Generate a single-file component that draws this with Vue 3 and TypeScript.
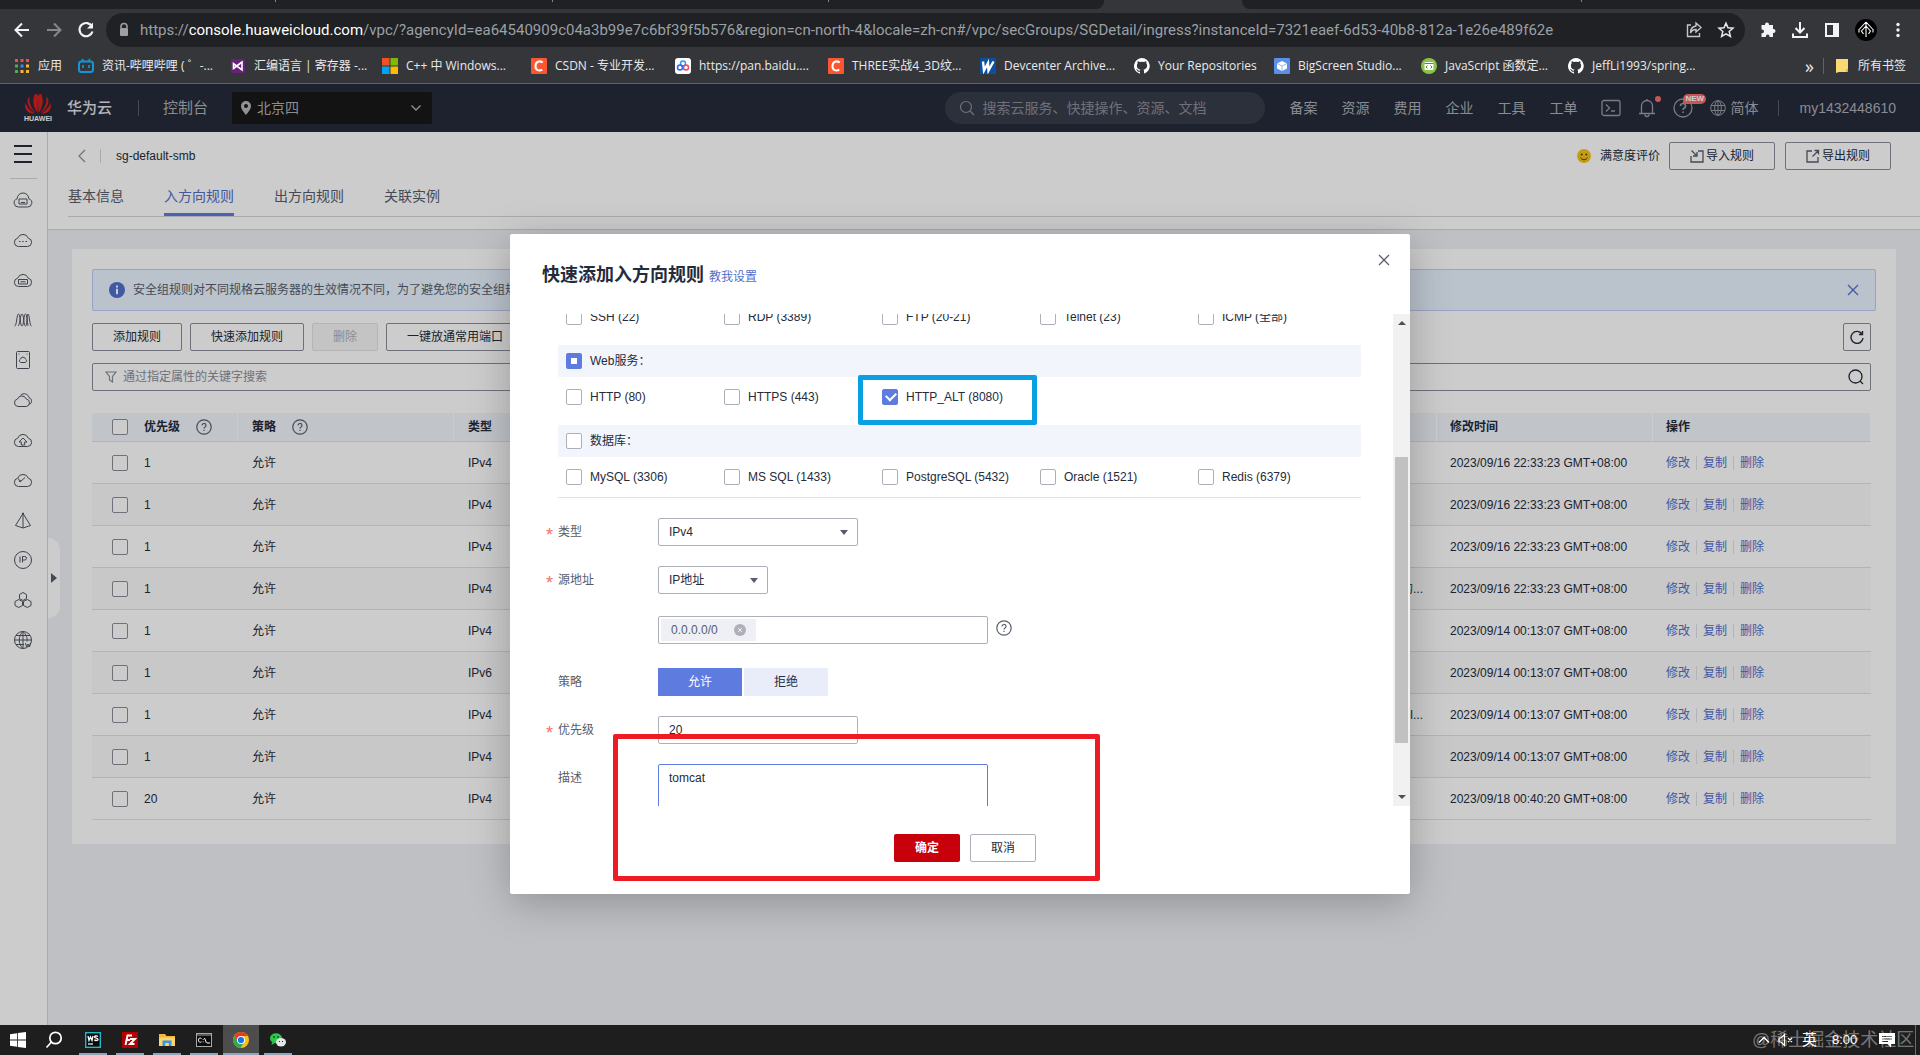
<script setup lang="ts">
import { ref } from 'vue'

interface Bookmark { icon: string; label: string; width: number }
interface Rule { priority: string; type: string; note: string; time: string }
interface Port { label: string; checked?: boolean }

const bookmarks: Bookmark[] = [
  { icon: 'apps', label: '应用', width: 64 },
  { icon: 'bili', label: '资讯-哔哩哔哩 ( ゜-...', width: 152 },
  { icon: 'vs', label: '汇编语言 | 寄存器 -...', width: 152 },
  { icon: 'ms', label: 'C++ 中 Windows...', width: 149 },
  { icon: 'csdn', label: 'CSDN - 专业开发...', width: 144 },
  { icon: 'pan', label: 'https://pan.baidu....', width: 153 },
  { icon: 'csdn', label: 'THREE实战4_3D纹...', width: 152 },
  { icon: 'w', label: 'Devcenter Archive...', width: 154 },
  { icon: 'git', label: 'Your Repositories', width: 140 },
  { icon: 'big', label: 'BigScreen Studio...', width: 147 },
  { icon: 'js', label: 'JavaScript 函数定...', width: 147 },
  { icon: 'git', label: 'JeffLi1993/spring...', width: 140 },
]

const navLinks = ['备案', '资源', '费用', '企业', '工具', '工单']
const tabs = ['基本信息', '入方向规则', '出方向规则', '关联实例']
const activeTab = ref(1)

const cloud = 'M5.500 16.500a4.200 4.200 0 0 1-.800-8.300 5.600 5.600 0 0 1 10.600 0A4.200 4.200 0 0 1 14.500 16.500z'
const sideIcons: string[] = [
  'M5.500 17a4.200 4.200 0 0 1-1.400-8.200C4.500 5 7 3 10 3s5.500 2 5.900 5.800A4.200 4.200 0 0 1 14.500 17zM6 9h8v5H6zM8 12.500h4',
  cloud + 'M6 11.500h1.500M9.300 11.500h1.400M12.500 11.500H14',
  cloud + 'M5.500 9.500h9v4.500h-9zM7.500 11.800h5',
  'M1.500 16c2.500 0 2-12 4-12s1.500 12 3.500 12 1.500-12 3.500-12 1.500 12 3 12M5 16c2 0 2-12 4-12s1.500 12 3.500 12 1-12 2.500-12 1.500 12 3.500 12',
  'M4.500 1.500h11a1 1 0 0 1 1 1v15a1 1 0 0 1-1 1h-11a1 1 0 0 1-1-1v-15a1 1 0 0 1 1-1zM7.500 12.500a2 2 0 0 1 0-3.500 2.600 2.600 0 0 1 5 0 2 2 0 0 1 0 3.500zM5.500 4h1M13.500 4h1',
  'M5 16.500a3.800 3.800 0 0 1-.500-7.500 4.700 4.700 0 0 1 8.800 0 3.800 3.800 0 0 1 0 7.500zM7.500 5.300c3-3 8-1.300 8.500 2.400 3.200.700 3.500 5.300.500 6.600',
  cloud + 'M10 8l-4 4h2.300v3h3.400v-3H14z',
  cloud + 'M5.500 8.500l1.500 3.500 5-4.500M7 12l1-2',
  'M10 3.500L2.500 15.500 10 18l7.500-2.500zM10 3.500V18M9.500 3h1v1h-1z',
  'M10 1.500a8.500 8.500 0 1 1 0 17 8.500 8.500 0 0 1 0-17zM7 6.500v6M9.500 12.500v-6h2.200a1.700 1.700 0 0 1 0 3.500H9.500',
  'M10 2.500l3.500 2v4l-3.500 2-3.500-2v-4zM5.700 9.500l3.800 2v4l-3.800 2-3.700-2v-4zM14.300 9.500l3.700 2v4l-3.700 2-3.800-2v-4z',
  'M10 1.500a8.500 8.500 0 1 1 0 17 8.500 8.500 0 0 1 0-17zM10 1.500c-5 4.500-5 12.500 0 17M10 1.500c3.500 3 4.500 6.500 4 10M1.500 10h17M3 5.500h14M3 14.500h8M10 1.500v17M12.500 13l1 4 1.500-3 1.500 3 1-4',
]

const rules: Rule[] = [
  { priority: '1', type: 'IPv4', note: '', time: '2023/09/16 22:33:23 GMT+08:00' },
  { priority: '1', type: 'IPv4', note: '', time: '2023/09/16 22:33:23 GMT+08:00' },
  { priority: '1', type: 'IPv4', note: '', time: '2023/09/16 22:33:23 GMT+08:00' },
  { priority: '1', type: 'IPv4', note: '的...', time: '2023/09/16 22:33:23 GMT+08:00' },
  { priority: '1', type: 'IPv4', note: '', time: '2023/09/14 00:13:07 GMT+08:00' },
  { priority: '1', type: 'IPv6', note: '', time: '2023/09/14 00:13:07 GMT+08:00' },
  { priority: '1', type: 'IPv4', note: 'l...', time: '2023/09/14 00:13:07 GMT+08:00' },
  { priority: '1', type: 'IPv4', note: '', time: '2023/09/14 00:13:07 GMT+08:00' },
  { priority: '20', type: 'IPv4', note: '', time: '2023/09/18 00:40:20 GMT+08:00' },
]
const actions = ['修改', '复制', '删除']

const remotePorts: Port[] = [
  { label: 'SSH (22)' }, { label: 'RDP (3389)' }, { label: 'FTP (20-21)' }, { label: 'Telnet (23)' }, { label: 'ICMP (全部)' },
]
const webPorts: Port[] = [
  { label: 'HTTP (80)' }, { label: 'HTTPS (443)' }, { label: 'HTTP_ALT (8080)', checked: true },
]
const dbPorts: Port[] = [
  { label: 'MySQL (3306)' }, { label: 'MS SQL (1433)' }, { label: 'PostgreSQL (5432)' }, { label: 'Oracle (1521)' }, { label: 'Redis (6379)' },
]

const priority = ref('20')
const description = ref('tomcat')
const allow = ref(true)
</script>

<template>
  <div class="screen">
    <header class="chrome">
      <div class="tabstrip">
        <span class="strip-left"><i></i><i></i><i></i></span><span class="strip-active"></span><span class="strip-right"><i></i></span>
      </div>
      <div class="toolbar">
        <button class="tool" aria-label="back"><svg width="20" height="20" viewBox="0 0 20 20" fill="none" stroke="#f1f3f4" stroke-width="2"><path d="M17 10H4M10 3.500L3.500 10l6.500 6.500" /></svg></button>
        <button class="tool" aria-label="forward"><svg width="20" height="20" viewBox="0 0 20 20" fill="none" stroke="#85878a" stroke-width="2"><path d="M3 10h13M10 3.500l6.500 6.500-6.500 6.500" /></svg></button>
        <button class="tool" aria-label="reload"><svg width="20" height="20" viewBox="0 0 20 20" fill="none" stroke="#f1f3f4" stroke-width="2.200"><path d="M16 6.500A6.600 6.600 0 1 0 16.500 11.500" /><path d="M17 2.500v6h-6z" fill="#f1f3f4" stroke="none" /></svg></button>
        <div class="omnibox">
          <svg width="12" height="16" viewBox="0 0 12 16"><path d="M3 6V4.500a3 3 0 0 1 6 0V6" fill="none" stroke="#9aa0a6" stroke-width="1.600" /><rect x="2" y="6" width="8" height="8" rx="1" fill="#9aa0a6" /></svg>
          <span class="url">https://<b>console.huaweicloud.com</b>/vpc/?agencyId=ea64540909c04a3b99e7c6bf39f5b576&amp;region=cn-north-4&amp;locale=zh-cn#/vpc/secGroups/SGDetail/ingress?instanceId=7321eaef-6d53-40b8-812a-1e26e489f62e</span>
          <svg class="omni-icon" width="18" height="18" viewBox="0 0 18 18" fill="none" stroke="#c4c7c5" stroke-width="1.400"><path d="M6 4H2.500v11.500h12V12M11 2l5 4.500-5 4.500V8.500C8 8.500 6.500 9.500 5.500 12c0-4 2-6.500 5.500-7z" /></svg>
          <svg class="omni-icon" width="18" height="18" viewBox="0 0 18 18" fill="none" stroke="#e8eaed" stroke-width="1.500"><path d="M9 2.200l2 4.600 5 .4-3.800 3.300 1.200 4.900L9 12.800l-4.400 2.600 1.200-4.900L2 7.200l5-.4z" /></svg>
        </div>
        <svg width="18" height="18" viewBox="0 0 18 18" fill="#f1f3f4"><path d="M6 3.500a2 2 0 0 1 4 0V4h4v4h.5a2 2 0 0 1 0 4H14v4h-3.500v-.6a1.800 1.800 0 0 0-3.600 0v.6H2.500v-3.800h.6a1.900 1.900 0 0 0 0-3.800h-.6V4H6z" /></svg>
        <svg width="18" height="18" viewBox="0 0 18 18" fill="none" stroke="#f1f3f4" stroke-width="2"><path d="M9 1v10M4.500 7L9 11.500 13.500 7M2 12.500V16h14v-3.500" /></svg>
        <svg width="18" height="18" viewBox="0 0 18 18"><path d="M3 3h12v12H3z" fill="none" stroke="#f1f3f4" stroke-width="2" /><path d="M10 2h6v14h-6z" fill="#f1f3f4" /></svg>
        <svg width="22" height="22" viewBox="0 0 22 22"><circle cx="11" cy="11" r="11" fill="#000" /><path d="M11 3v15M11 3L4.500 10M11 3l6.500 7M11 7l-4.500 5 2 3M11 7l4.500 5-2 3M4 10v3.500M18 10v3.500" stroke="#fff" stroke-width="1.100" fill="none" /></svg>
        <svg class="dots" width="6" height="18" viewBox="0 0 6 18" fill="#f1f3f4"><circle cx="3" cy="3.500" r="1.700" /><circle cx="3" cy="9" r="1.700" /><circle cx="3" cy="14.500" r="1.700" /></svg>
      </div>
      <nav class="bookmarks">
        <a v-for="(b, i) in bookmarks" :key="i" href="#" class="bookmark" :style="{ width: b.width + 'px' }">
          <svg width="16" height="16" viewBox="0 0 16 16">
            <template v-if="b.icon === 'apps'">
              <path d="M1 1h3v3H1zM6.500 1h3v3h-3zM12 1h3v3h-3z" fill="#e5534b" /><path d="M1 6.500h3v3H1z" fill="#4caf50" /><path d="M6.500 6.500h3v3h-3z" fill="#4285f4" /><path d="M12 6.500h3v3h-3zM6.500 12h3v3h-3zM12 12h3v3h-3z" fill="#f2b632" /><path d="M1 12h3v3H1z" fill="#4caf50" />
            </template>
            <template v-else-if="b.icon === 'bili'">
              <path d="M4 1l2 2.500M12 1l-2 2.500" stroke="#1296db" stroke-width="1.600" /><rect x="1" y="3.500" width="14" height="10.500" rx="2.500" fill="none" stroke="#1296db" stroke-width="2" /><path d="M5 7v3M11 7v3" stroke="#1296db" stroke-width="1.600" />
            </template>
            <template v-else-if="b.icon === 'vs'">
              <rect x="1" y="1" width="14" height="14" fill="#68217a" /><path d="M3.500 5.500v5L12 4v8L3.500 5.500zM3.500 10.500L12 4" fill="none" stroke="#fff" stroke-width="1.600" />
            </template>
            <template v-else-if="b.icon === 'ms'">
              <path d="M0 0h7.500v7.500H0z" fill="#f25022" /><path d="M8.500 0H16v7.500H8.500z" fill="#7fba00" /><path d="M0 8.500h7.500V16H0z" fill="#00a4ef" /><path d="M8.500 8.500H16V16H8.500z" fill="#ffb900" />
            </template>
            <template v-else-if="b.icon === 'csdn'">
              <rect width="16" height="16" rx="1" fill="#fc5531" /><path d="M11.800 4.500C8 2 4.500 4 4.500 8.200c0 4 3.500 5.300 6.800 3.500" fill="none" stroke="#fff" stroke-width="2" />
            </template>
            <template v-else-if="b.icon === 'pan'">
              <rect width="16" height="16" rx="3" fill="#fff" /><circle cx="8" cy="5.500" r="2.500" fill="none" stroke="#2f9bff" stroke-width="1.500" /><circle cx="5" cy="9.500" r="2.500" fill="none" stroke="#2468f2" stroke-width="1.500" /><circle cx="11" cy="9.500" r="2.500" fill="none" stroke="#f0455a" stroke-width="1.500" />
            </template>
            <template v-else-if="b.icon === 'w'">
              <rect width="16" height="16" fill="#0b4f9e" /><path d="M3 3.500l1 9L8 5l.500 7.500L13.500 3.500" fill="none" stroke="#fff" stroke-width="2.400" />
            </template>
            <template v-else-if="b.icon === 'git'">
              <path fill="#fff" d="M8 0a8 8 0 0 0-2.500 15.600c.4.100.5-.2.500-.400v-1.500c-2.200.500-2.700-1-2.700-1-.4-.9-.9-1.200-.9-1.200-.7-.5.100-.5.100-.5.800.1 1.200.8 1.200.8.700 1.300 1.900.9 2.300.7.100-.5.300-.9.500-1.100-1.800-.2-3.600-.9-3.600-4 0-.9.300-1.600.8-2.100-.1-.2-.4-1 .1-2.100 0 0 .7-.2 2.200.8a7.500 7.500 0 0 1 4 0c1.500-1 2.200-.8 2.200-.8.400 1.100.200 1.900.1 2.100.5.600.8 1.300.8 2.100 0 3.100-1.900 3.800-3.700 4 .3.300.600.800.6 1.500v2.200c0 .2.100.500.500.400A8 8 0 0 0 8 0z" />
            </template>
            <template v-else-if="b.icon === 'big'">
              <rect width="16" height="16" rx="1" fill="#5b8fe8" /><path d="M8 3l5 2.500v5L8 13l-5-2.500v-5z" fill="#fff" /><path d="M3 5.500L8 8l5-2.500M8 8v5" stroke="#9bbcf2" fill="none" />
            </template>
            <template v-else>
              <circle cx="8" cy="8" r="8" fill="#8bc34a" /><rect x="3.500" y="4" width="9" height="8" rx="1" fill="#fff" /><path d="M3.500 5.500h9M6.500 7.500L5 9l1.500 1.500M9.500 7.500L11 9l-1.500 1.500" stroke="#5b8a2a" fill="none" />
            </template>
          </svg>
          <span>{{ b.label }}</span>
        </a>
        <span class="more">»</span>
        <a href="#" class="bookmark all"><svg width="16" height="16" viewBox="0 0 16 16"><path d="M2 1h12v13H5l-3 1z" fill="#fbd872" /><path d="M12 11h2v3h-2z" fill="#e2b23a" /></svg><span>所有书签</span></a>
      </nav>
    </header>

    <div class="page">
      <header class="topbar">
        <div class="logo">
          <svg width="28" height="21" viewBox="0 0 28 21"><g fill="#d9201f"><path d="M13.500 20C9 14 8 6 11 1c2-.5 3 1 3 3z" /><path d="M14.500 20C19 14 20 6 17 1c-2-.5-3 1-3 3z" /><path d="M12 20C7 15 4.500 9 6 4 3.500 5 3 8 4 11s4 7 8 9z" /><path d="M16 20c5-5 7.500-11 6-16 2.500 1 3 4 2 7s-4 7-8 9z" /><path d="M11 20.500C6 18 3 14 1.500 10 .5 13 1 16 3.500 18.500c2 1.800 4 2 7.500 2z" /><path d="M17 20.500c5-2.500 8-6.500 9.500-10.500 1 3 .5 6-2 8.500-2 1.800-4 2-7.500 2z" /></g></svg>
          <span>HUAWEI</span>
        </div>
        <strong class="brand">华为云</strong>
        <i class="vline"></i>
        <a href="#" class="console">控制台</a>
        <button class="region">
          <svg width="12" height="16" viewBox="0 0 12 16"><path fill-rule="evenodd" d="M6 1a5 5 0 0 1 5 5c0 3.500-5 9-5 9S1 9.500 1 6a5 5 0 0 1 5-5zm0 3a2 2 0 1 0 0 4 2 2 0 0 0 0-4z" fill="#b4b7bd" /></svg>
          <span>北京四</span>
          <svg width="12" height="8" viewBox="0 0 12 8" fill="none" stroke="#b4b7bd" stroke-width="1.300"><path d="M1.500 1.500L6 6l4.500-4.500" /></svg>
        </button>
        <label class="cloud-search">
          <svg width="16" height="16" viewBox="0 0 16 16" fill="none" stroke="#8a8e99" stroke-width="1.200"><circle cx="7" cy="7" r="5.500" /><path d="M11 11l4 4" /></svg>
          <input type="text" placeholder="搜索云服务、快捷操作、资源、文档" aria-label="搜索" />
        </label>
        <nav class="topnav"><a v-for="n in navLinks" :key="n" href="#">{{ n }}</a></nav>
        <div class="topicons">
          <svg width="20" height="18" viewBox="0 0 20 18" fill="none" stroke="#9a9da4" stroke-width="1.300"><rect x="1" y="1.500" width="18" height="15" rx="2" /><path d="M5 5.500L8.500 9 5 12.500M10 12h4" /></svg>
          <span class="bell">
            <svg width="18" height="20" viewBox="0 0 18 20" fill="none" stroke="#9a9da4" stroke-width="1.300"><path d="M3.500 15V8a5.500 5.500 0 0 1 11 0v7M1 15.500h16M7 16.500a2 2 0 0 0 4 0M9 2.500V1" /></svg>
            <i class="dot"></i>
          </span>
          <span class="help">
            <svg width="20" height="20" viewBox="0 0 20 20" fill="none" stroke="#9a9da4" stroke-width="1.300"><circle cx="10" cy="10" r="9" /><path d="M7.500 8a2.500 2.500 0 1 1 3.500 2.200c-.8.400-1 .8-1 1.800M10 13.500v1.500" stroke-width="1.600" /></svg>
            <i class="new">NEW</i>
          </span>
          <svg width="16" height="16" viewBox="0 0 16 16" fill="none" stroke="#9a9da4"><circle cx="8" cy="8" r="7.300" /><ellipse cx="8" cy="8" rx="3.300" ry="7.300" /><path d="M1 5.500h14M1 10.500h14M8 1v14" /></svg>
        </div>
        <a href="#" class="lang">简体</a>
        <i class="vline right"></i>
        <a href="#" class="user">my1432448610</a>
      </header>

      <div class="body">
        <aside class="sidebar">
          <button class="menu" aria-label="menu"><i></i><i></i><i></i></button>
          <hr />
          <a v-for="(d, i) in sideIcons" :key="i" href="#" class="side-link" aria-label="service">
            <svg width="20" height="20" viewBox="0 0 20 20" fill="none" stroke="#4f5460" stroke-width="1"><path :d="d" /></svg>
          </a>
          <button class="expander" aria-label="expand"><i></i></button>
        </aside>

        <main class="main">
          <section class="heading">
            <div class="crumbs">
              <svg width="8" height="14" viewBox="0 0 8 14" fill="none" stroke="#8a8e99" stroke-width="1.200"><path d="M7 1L1 7l6 6" /></svg>
              <i class="crumb-line"></i>
              <span class="crumb">sg-default-smb</span>
              <svg class="smile" width="14" height="14" viewBox="0 0 14 14"><circle cx="7" cy="7" r="7" fill="#f5c518" /><circle cx="4.700" cy="5.500" r="1" fill="#5b3c00" /><circle cx="9.300" cy="5.500" r="1" fill="#5b3c00" /><path d="M3.500 8.500c1.500 3 5.500 3 7 0" fill="none" stroke="#5b3c00" /></svg>
              <a href="#" class="rate">满意度评价</a>
              <button class="btn io"><svg width="14" height="14" viewBox="0 0 14 14" fill="none" stroke="#575d6c" stroke-width="1.300"><path d="M1 7v6h12V2H8M1.500 1.500L7 7M7 3v4H3" /></svg>导入规则</button>
              <button class="btn io"><svg width="14" height="14" viewBox="0 0 14 14" fill="none" stroke="#575d6c" stroke-width="1.300"><path d="M6 2H1v11h11V8M6.500 7.500L12.500 1.500M8.500 1.500h4v4" /></svg>导出规则</button>
            </div>
            <nav class="tabs">
              <a v-for="(t, i) in tabs" :key="t" href="#" :class="{ active: i === activeTab }" @click.prevent="activeTab = i">{{ t }}</a>
            </nav>
          </section>

          <section class="card">
            <div class="alert">
              <svg width="16" height="16" viewBox="0 0 16 16"><circle cx="8" cy="8" r="8" fill="#526ecc" /><path d="M8 3.500v2M8 6.800v5.400" stroke="#fff" stroke-width="2" /></svg>
              <span>安全组规则对不同规格云服务器的生效情况不同，为了避免您的安全组规则</span>
              <svg class="alert-x" width="12" height="12" viewBox="0 0 12 12" stroke="#526ecc" stroke-width="1.300"><path d="M1 1l10 10M11 1L1 11" /></svg>
            </div>
            <div class="content">
              <div class="actions">
                <button class="btn">添加规则</button>
                <button class="btn">快速添加规则</button>
                <button class="btn" disabled>删除</button>
                <button class="btn">一键放通常用端口</button>
                <button class="btn refresh" aria-label="refresh"><svg width="14" height="14" viewBox="0 0 14 14" fill="none" stroke="#252b3a" stroke-width="1.400"><path d="M12 4A6 6 0 1 0 13 8M12.500 1v3.500H9" /></svg></button>
              </div>
              <label class="filter">
                <svg width="12" height="12" viewBox="0 0 12 12" fill="none" stroke="#8a8e99" stroke-width="1.200"><path d="M1 1h10L7.500 5.500V11l-3-2V5.500z" /></svg>
                <input type="text" placeholder="通过指定属性的关键字搜索" aria-label="筛选" />
                <svg width="16" height="16" viewBox="0 0 16 16" fill="none" stroke="#252b3a" stroke-width="1.300"><circle cx="7.500" cy="7.500" r="6.500" /><path d="M12 12l3 3" /></svg>
              </label>
              <table>
                <colgroup><col class="c1" /><col class="c2" /><col /><col class="c4" /><col class="c5" /></colgroup>
                <thead>
                  <tr>
                    <th><div class="cell"><input type="checkbox" aria-label="全选" />优先级<svg class="q" width="16" height="16" viewBox="0 0 16 16" fill="none" stroke="#575d6c" stroke-width="1.200"><circle cx="8" cy="8" r="7.200" /><path d="M6 6.500a2 2 0 1 1 2.800 1.800c-.6.300-.8.600-.8 1.200M8 10.700V12" /></svg></div></th>
                    <th><div class="cell">策略<svg class="q" width="16" height="16" viewBox="0 0 16 16" fill="none" stroke="#575d6c" stroke-width="1.200"><circle cx="8" cy="8" r="7.200" /><path d="M6 6.500a2 2 0 1 1 2.800 1.800c-.6.300-.8.600-.8 1.200M8 10.700V12" /></svg></div></th>
                    <th>类型</th>
                    <th>修改时间</th>
                    <th>操作</th>
                  </tr>
                </thead>
                <tbody>
                  <tr v-for="(r, i) in rules" :key="i">
                    <td><div class="cell"><input type="checkbox" aria-label="选择" />{{ r.priority }}</div></td>
                    <td>允许</td>
                    <td><div class="split"><span>{{ r.type }}</span><span>{{ r.note }}</span></div></td>
                    <td>{{ r.time }}</td>
                    <td><a v-for="a in actions" :key="a" href="#" class="op">{{ a }}</a></td>
                  </tr>
                </tbody>
              </table>
            </div>
          </section>
        </main>
      </div>

      <div class="overlay">
        <div class="modal" role="dialog" aria-label="快速添加入方向规则">
          <div class="modal-head">
            <h2>快速添加入方向规则</h2><a href="#">教我设置</a>
            <button class="close" aria-label="close"><svg width="12" height="12" viewBox="0 0 12 12" stroke="#575d6c" stroke-width="1.300"><path d="M1 1l10 10M11 1L1 11" /></svg></button>
          </div>
          <div class="scroller">
            <div class="form">
              <div class="groups">
                <div class="ports first"><label v-for="p in remotePorts" :key="p.label"><input type="checkbox" />{{ p.label }}</label></div>
                <label class="group-head"><input type="checkbox" class="partial" />Web服务：</label>
                <div class="ports"><label v-for="p in webPorts" :key="p.label"><input type="checkbox" :checked="p.checked" />{{ p.label }}</label></div>
                <label class="group-head"><input type="checkbox" />数据库：</label>
                <div class="ports last"><label v-for="p in dbPorts" :key="p.label"><input type="checkbox" />{{ p.label }}</label></div>
              </div>
              <div class="field">
                <label class="name required" for="kind">类型</label>
                <span class="select wide"><select id="kind"><option>IPv4</option></select></span>
              </div>
              <div class="field">
                <label class="name required" for="source">源地址</label>
                <span class="select"><select id="source"><option>IP地址</option></select></span>
              </div>
              <div class="field addresses">
                <span class="name"></span>
                <div class="tagbox">
                  <span class="tag">0.0.0.0/0<svg width="12" height="12" viewBox="0 0 12 12"><circle cx="6" cy="6" r="6" fill="#adb0b8" /><path d="M4 4l4 4M8 4L4 8" stroke="#eef0f5" /></svg></span>
                  <input type="text" aria-label="IP地址" />
                </div>
                <svg class="tip" width="16" height="16" viewBox="0 0 16 16" fill="none" stroke="#575d6c" stroke-width="1.200"><circle cx="8" cy="8" r="7.200" /><path d="M6 6.500a2 2 0 1 1 2.800 1.800c-.6.300-.8.600-.8 1.200M8 10.700V12" /></svg>
              </div>
              <div class="field">
                <span class="name">策略</span>
                <div class="switch">
                  <button :class="{ on: allow }" @click="allow = true">允许</button>
                  <button :class="{ on: !allow }" @click="allow = false">拒绝</button>
                </div>
              </div>
              <div class="field">
                <label class="name required" for="prio">优先级</label>
                <input id="prio" v-model="priority" class="text" type="text" />
              </div>
              <div class="field">
                <label class="name" for="desc">描述</label>
                <textarea id="desc" v-model="description" class="text"></textarea>
              </div>
            </div>
            <div class="scrollbar"><i class="up"></i><i class="thumb"></i><i class="down"></i></div>
          </div>
          <div class="modal-foot">
            <button class="ok">确定</button>
            <button class="btn">取消</button>
          </div>
          <i class="mark blue"></i>
          <i class="mark red"></i>
        </div>
      </div>
    </div>

    <footer class="taskbar">
      <button class="start" aria-label="start"><svg width="16" height="16" viewBox="0 0 16 16" fill="#fff"><path d="M0 2.200L7 1.200v6.400H0zM7.800 1.100L16 0v7.600H7.800zM0 8.400h7v6.400l-7-1zM7.800 8.400H16V16l-8.200-1.100z" /></svg></button>
      <button class="start" aria-label="search"><svg width="18" height="18" viewBox="0 0 18 18" fill="none" stroke="#fff" stroke-width="1.700"><circle cx="10.500" cy="7" r="5.700" /><path d="M6.500 11L1.500 16.500" /></svg></button>
      <button class="task" aria-label="WebStorm"><svg width="16" height="16" viewBox="0 0 16 16"><rect x=".7" y=".7" width="14.600" height="14.600" fill="#0a0a0a" stroke="#22b8c9" stroke-width="1.400" /><path d="M3 4l1 4.500L5.500 5 7 8.500 8 4M13 4.500c-1.500-1-3.500-.5-3.500.5 0 1.500 3.500.8 3.500 2.400 0 1.200-2.300 1.500-3.700.5" fill="none" stroke="#fff" stroke-width="1.300" /><path d="M3 12h5" stroke="#fff" stroke-width="1.200" /></svg></button>
      <button class="task" aria-label="FileZilla"><svg width="16" height="16" viewBox="0 0 16 16"><rect width="16" height="16" fill="#b30000" /><path d="M3.500 13L5.500 3.500H10M4.500 8H8M8 7h5l-5 5h4.500" fill="none" stroke="#fff" stroke-width="1.900" /></svg></button>
      <button class="task" aria-label="Explorer"><svg width="16" height="16" viewBox="0 0 16 16"><path d="M0 2h6l1.500 2H16v10H0z" fill="#f0b93a" /><path d="M0 5.500h16V14H0z" fill="#fbd56a" /><path d="M3.500 14V8.500h9V14h-2.700v-3H6.200v3z" fill="#3a96dd" /></svg></button>
      <button class="task" aria-label="Terminal"><svg width="16" height="14" viewBox="0 0 16 14"><rect x=".5" y=".5" width="15" height="13" fill="#0c0c0c" stroke="#a9a9a9" /><path d="M1 2h14" stroke="#a9a9a9" /><path d="M5.500 5.500c-2-1.200-3 0-3 1.700s1.200 2.700 3 1.600M7.200 6v.8M7.200 8.500v.8M8.500 5l2 5M11 10h3" stroke="#fff" fill="none" /></svg></button>
      <button class="task current" aria-label="Chrome"><svg width="16" height="16" viewBox="0 0 16 16"><circle cx="8" cy="8" r="8" fill="#fbc116" /><path d="M1.100 4A8 8 0 0 1 14.900 4H8L5 9.500z" fill="#e33b2e" /><path d="M1.100 4A8 8 0 0 0 7.500 16L11 10 5 9.500z" fill="#2da94f" /><circle cx="8" cy="8" r="4" fill="#fff" /><circle cx="8" cy="8" r="3.100" fill="#1a73e8" /></svg></button>
      <button class="task" aria-label="WeChat"><svg width="16" height="16" viewBox="0 0 16 16"><ellipse cx="6" cy="6.300" rx="6" ry="5" fill="#2dc84d" /><path d="M2 10l-.5 3L5 11z" fill="#2dc84d" /><ellipse cx="11" cy="10.300" rx="5" ry="4.200" fill="#e6e6e6" /><circle cx="4" cy="5" r=".8" /><circle cx="8" cy="5" r=".8" /><circle cx="9.500" cy="9.500" r=".6" /><circle cx="12.500" cy="9.500" r=".6" /></svg></button>
      <div class="tray">
        <svg width="12" height="8" viewBox="0 0 12 8" fill="none" stroke="#fff" stroke-width="1.500"><path d="M1 6.500l5-5 5 5" /></svg>
        <svg width="16" height="14" viewBox="0 0 16 14" fill="none" stroke="#fff" stroke-width="1.200"><path d="M1 5h2l3.500-3.500v11L3 9H1zM10 5l4 4M14 5l-4 4" /></svg>
        <span class="ime">英</span>
        <span class="clock">8:00</span>
        <svg class="notice" width="16" height="16" viewBox="0 0 16 16"><path d="M0 1h16v11h-4v3.500L8.500 12H0z" fill="#fff" /><path d="M3 4.500h10M3 7h10M3 9.500h6" stroke="#1f1f1f" /></svg>
        <span class="watermark">@稀土掘金技术社区</span>
      </div>
    </footer>
  </div>
</template>

<style>
body { margin: 0; background: #1e1e1f; }
</style>

<style scoped>
.screen { min-height: 100vh; display: flex; flex-direction: column; overflow: hidden; font: 12px/16px "Liberation Sans", "Noto Sans CJK SC", sans-serif; color: #252b3a; }
.screen * { box-sizing: border-box; }
a { text-decoration: none; color: inherit; }
i { font-style: normal; }
svg { flex: none; display: block; }
button, input, select, textarea { font: inherit; color: inherit; margin: 0; }
button { padding: 0; border: 0; background: none; }
input, select, textarea { outline: 0; }

.chrome { background: #35363a; border-bottom: 1px solid #5f6368; font-family: "Open Sans", "Noto Sans CJK SC", sans-serif; }
.tabstrip { display: flex; height: 9px; }
.tabstrip span { display: flex; justify-content: space-evenly; }
.tabstrip i { width: 1px; height: 2px; background: #85878a; }
.strip-left { flex: 1104; background: #202124; border-bottom-right-radius: 8px; }
.strip-active { flex: 138; }
.strip-right { flex: 678; background: #202124; border-bottom-left-radius: 8px; }
.toolbar { display: flex; align-items: center; gap: 14px; height: 42px; padding: 0 19px 0 12px; }
.toolbar > .tool { width: 20px; margin-right: -2px; }
.dots { margin-left: 4px; }
.omnibox { flex: 1; display: flex; align-items: center; height: 34px; margin-left: -2px; padding: 0 10px 0 12px; border-radius: 17px; background: #202124; min-width: 0; }
.url { flex: 1; margin-left: 10px; font-family: Roboto, sans-serif; font-size: 15px; line-height: 24px; color: #9aa0a6; white-space: nowrap; overflow: hidden; }
.url b { font-weight: 400; color: #fff; }
.omni-icon { margin-left: 14px; }
.bookmarks { display: flex; align-items: center; height: 32px; padding: 0 14px 3px; color: #e8eaed; }
.bookmark { display: flex; align-items: center; gap: 8px; flex: none; white-space: nowrap; }
.more { margin-left: auto; font-size: 18px; }
.bookmark.all { margin-left: 9px; padding-left: 10px; border-left: 1px solid #5f6368; }

.page { flex: 1; position: relative; display: flex; flex-direction: column; background: #eef0f5; }
.topbar { display: flex; align-items: center; height: 48px; padding: 0 24px 0 24px; background: #252b3a; color: #adb0b8; font-size: 14px; line-height: 20px; }
.logo { display: flex; flex-direction: column; align-items: center; width: 28px; }
.logo span { font-size: 7px; line-height: 10px; font-weight: 700; color: #fff; }
.brand { margin-left: 15px; font-size: 15px; font-weight: 500; color: #dfe1e6; }
.vline { width: 1px; height: 16px; margin-left: 26px; background: #575d6c; }
.console { margin-left: 24px; font-size: 15px; }
.region { display: flex; align-items: center; width: 200px; height: 32px; margin-left: 24px; padding: 0 10px 0 8px; border-radius: 2px; background: #181818; }
.region span { flex: 1; margin-left: 5px; text-align: left; }
.cloud-search { display: flex; align-items: center; gap: 7px; width: 320px; height: 32px; margin-left: auto; padding: 0 14px; border-radius: 16px; background: #373c4a; }
.cloud-search input { flex: 1; min-width: 0; padding: 0; border: 0; background: none; }
.cloud-search input::placeholder { color: #8a8e99; }
.topnav { display: flex; gap: 24px; margin-left: 24px; }
.topicons { display: flex; align-items: center; gap: 17px; margin-left: 24px; }
.bell, .help { position: relative; }
.dot { position: absolute; top: -2px; right: -5px; width: 6px; height: 6px; border-radius: 50%; background: #f66f6a; }
.new { position: absolute; top: -4px; left: 10px; padding: 0 2px; border-radius: 5px 5px 5px 0; background: #f66f6a; color: #fff; font: 700 8px/10px "Liberation Sans", sans-serif; }
.lang { margin-left: 4px; }
.vline.right { margin-left: 20px; }
.user { margin-left: 20px; }

.body { flex: 1; display: flex; }
.sidebar { position: relative; display: flex; flex-direction: column; align-items: center; width: 48px; padding: 13px 1px 0 0; background: #fff; border-right: 1px solid #d3d5da; }
.menu { display: flex; flex-direction: column; gap: 6px; width: 18px; padding: 0; }
.menu i { height: 2px; background: #252b3a; }
.sidebar hr { width: 27px; margin: 15px 0 1px; border: 0; border-top: 1px solid #d3d5da; }
.side-link { padding: 10px 0; }
.expander { position: absolute; left: 48px; top: 406px; width: 12px; height: 80px; border-radius: 0 12px 12px 0; background: #fff; }
.expander i { display: block; width: 0; margin-left: 3px; border: 5px solid transparent; border-left: 6px solid #575d6c; border-right: 0; }
.main { flex: 1; min-width: 0; }
.heading { height: 98px; background: #fff; border-bottom: 1px solid #d3d5da; }
.crumbs { display: flex; align-items: center; height: 48px; padding: 0 29px 0 30px; }
.crumb-line { width: 1px; height: 14px; margin: 0 15px 0 14px; background: #d3d5da; }
.smile { margin-left: auto; }
.rate { margin: 0 9px; }
.btn { height: 28px; padding: 0 20px; border: 1px solid #8a8e99; border-radius: 2px; background: #fff; white-space: nowrap; }
.btn:disabled { border-color: #dfe1e6; background: #f5f5f6; color: #adb0b8; }
.btn.io { display: flex; align-items: center; gap: 2px; }
.btn.io + .btn.io { margin-left: 10px; }
.tabs { display: flex; gap: 40px; height: 37px; margin-left: 20px; border-bottom: 1px solid #d3d5da; font-size: 14px; line-height: 32px; color: #575d6c; }
.tabs a { height: 36px; border-bottom: 3px solid transparent; }
.tabs a.active { color: #526ecc; border-color: #5e7ce0; }
.card { margin: 19px 24px; padding: 20px; background: #fff; }
.alert { display: flex; align-items: center; gap: 8px; height: 42px; padding: 0 16px; border: 1px solid #beccfa; border-radius: 2px; background: #e9f3ff; color: #575d6c; }
.alert-x { margin-left: auto; }
.content { padding: 12px 5px 4px 0; }
.actions { display: flex; gap: 8px; }
.refresh { display: flex; align-items: center; justify-content: center; width: 28px; padding: 0; margin-left: auto; }
.filter { display: flex; align-items: center; gap: 6px; height: 28px; margin: 12px 0 22px; padding: 0 6px 0 12px; border: 1px solid #8a8e99; border-radius: 2px; }
.filter input { flex: 1; padding: 0; border: 0; background: none; }
.filter input::placeholder { color: #8a8e99; }
table { width: 100%; table-layout: fixed; border-collapse: separate; border-spacing: 0; }
.c1 { width: 146px; } .c2 { width: 216px; } .c4 { width: 216px; } .c5 { width: 218px; }
th, td { padding: 0 14px; text-align: left; border-bottom: 1px solid #dfe1e6; white-space: nowrap; }
th { height: 29px; background: #f2f5fc; font-weight: 700; color: #252b3a; border-right: 1px solid #fff; }
td { height: 42px; }
tbody tr:nth-child(even) td { background: #fafafa; }
th:nth-child(n + 4), td:nth-child(n + 4) { padding: 0 13px; }
th:first-child, td:first-child { padding-left: 20px; }
.cell { display: flex; align-items: center; }
.cell input { margin-right: 16px; }
.q { margin-left: 16px; }
.split { display: flex; justify-content: space-between; }
.op { color: #526ecc; }
.op + .op { margin-left: 6px; padding-left: 6px; border-left: 1px solid #dfe1e6; }

input[type="checkbox"] { appearance: none; flex: none; width: 16px; height: 16px; border: 1px solid #8a8e99; border-radius: 2px; background: #fff; }
.modal input[type="checkbox"] { border-color: #adb0b8; }
.modal input[type="checkbox"]:checked { border-color: #5e7ce0; background: #5e7ce0; position: relative; }
.modal input[type="checkbox"]:checked::after { content: ""; position: absolute; left: 3px; top: 2px; width: 8px; height: 5px; border: solid #fff; border-width: 0 0 2px 2px; transform: rotate(-45deg); }
.modal input[type="checkbox"].partial { border: 5px solid #5e7ce0; }

.overlay { position: absolute; inset: 0; display: flex; align-items: flex-start; justify-content: center; padding-top: 150px; background: rgba(0, 0, 0, 0.2); }
.modal { position: relative; width: 900px; padding-bottom: 32px; border-radius: 2px; background: #fff; box-shadow: 0 8px 40px rgba(0, 0, 0, 0.25); }
.modal-head { display: flex; align-items: center; height: 80px; padding: 2px 20px 0 32px; }
.modal-head h2 { margin: 0; font-size: 18px; line-height: 26px; font-weight: 700; }
.modal-head a { margin: 4px 0 0 5px; color: #526ecc; }
.close { margin: 0 0 30px auto; }
.scroller { display: flex; height: 492px; overflow: hidden; }
.form { flex: 1; min-width: 0; padding-left: 32px; }
.groups { margin: -5px 32px 20px 16px; border-bottom: 1px solid #dfe1e6; }
.ports { display: flex; padding: 12px 8px 20px; }
.ports.first { padding-top: 0; }
.ports.last { padding-bottom: 12px; }
.ports label { display: flex; align-items: center; gap: 8px; flex: none; width: 158px; }
.group-head { display: flex; align-items: center; gap: 8px; height: 32px; padding: 0 8px; background: #f2f5fc; }
.field { display: flex; align-items: flex-start; margin-bottom: 20px; }
.field.addresses { margin: 22px 0 24px; }
.name { width: 116px; padding-left: 16px; line-height: 28px; color: #575d6c; }
.name.required { padding-left: 4px; }
.name.required::before { content: "*"; display: inline-block; width: 12px; font-size: 18px; line-height: 12px; vertical-align: -5px; color: #f66f6a; }
.select { position: relative; width: 110px; }
.select.wide { width: 200px; }
.select::after { content: ""; position: absolute; right: 10px; top: 12px; border: 4px solid transparent; border-top: 5px solid #575d6c; border-bottom: 0; pointer-events: none; }
select { appearance: none; width: 100%; height: 28px; padding: 0 10px; border: 1px solid #adb0b8; border-radius: 2px; background: #fff; }
.tagbox { display: flex; align-items: center; width: 330px; height: 28px; padding: 2px; border: 1px solid #adb0b8; border-radius: 2px; }
.tagbox input { flex: 1; min-width: 0; border: 0; }
.tag { display: flex; align-items: center; gap: 16px; height: 22px; padding: 0 10px; background: #eef0f5; color: #575d6c; }
.tip { margin: 4px 0 0 8px; }
.switch { display: flex; gap: 2px; }
.switch button { width: 84px; height: 28px; background: #e9edfa; }
.switch button.on { background: #5e7ce0; color: #fff; }
.text { width: 200px; height: 28px; padding: 0 10px; border: 1px solid #adb0b8; border-radius: 2px; }
textarea.text { width: 330px; height: 80px; padding: 5px 10px; border-color: #5e7ce0; resize: none; }
.scrollbar { display: flex; flex-direction: column; align-items: center; flex: none; width: 17px; background: #f1f1f1; }
.up { margin-top: 7px; border: 4px solid transparent; border-bottom-color: #505050; border-top: 0; }
.thumb { width: 13px; height: 286px; margin-top: 132px; background: #c1c1c1; }
.down { margin: auto 0 7px; border: 4px solid transparent; border-top-color: #505050; border-bottom: 0; }
.modal-foot { display: flex; justify-content: center; gap: 10px; margin: 28px 0 0 10px; }
.modal-foot button { width: 66px; padding: 0; height: 28px; }
.modal-foot .btn { border-color: #adb0b8; }
.ok { border-radius: 2px; background: #c7000b; color: #fff; font-weight: 700; }
.mark { position: absolute; pointer-events: none; border-radius: 2px; }
.blue { left: 348px; top: 141px; width: 179px; height: 50px; border: 5px solid #0a9fe2; }
.red { left: 103px; top: 500px; width: 487px; height: 147px; border: 5px solid #ed1c24; }

.taskbar { display: flex; height: 30px; background: #1e1e1f; }
.taskbar button { display: flex; align-items: center; justify-content: center; }
.start { width: 36px; }
.task { width: 28px; margin-left: 9px; border-bottom: 2px solid #8fa5bb; padding-top: 2px; }
.start + .task { margin-left: 7px; }
.task.current { width: 36px; margin: 0 -4px 0 5px; background: #4d4d4e; }
.tray { position: relative; display: flex; align-items: center; gap: 8px; margin: 0 4px 0 auto; width: 158px; border-right: 1px solid #6b6b6c; color: #fff; }
.ime { font-size: 15px; }
.clock { margin-left: 7px; font-size: 13px; }
.notice { margin: 0 20px 0 auto; }
.watermark { position: absolute; left: -6px; top: 3px; font-size: 18px; line-height: 24px; white-space: nowrap; color: rgba(255, 255, 255, 0.4); }
</style>
